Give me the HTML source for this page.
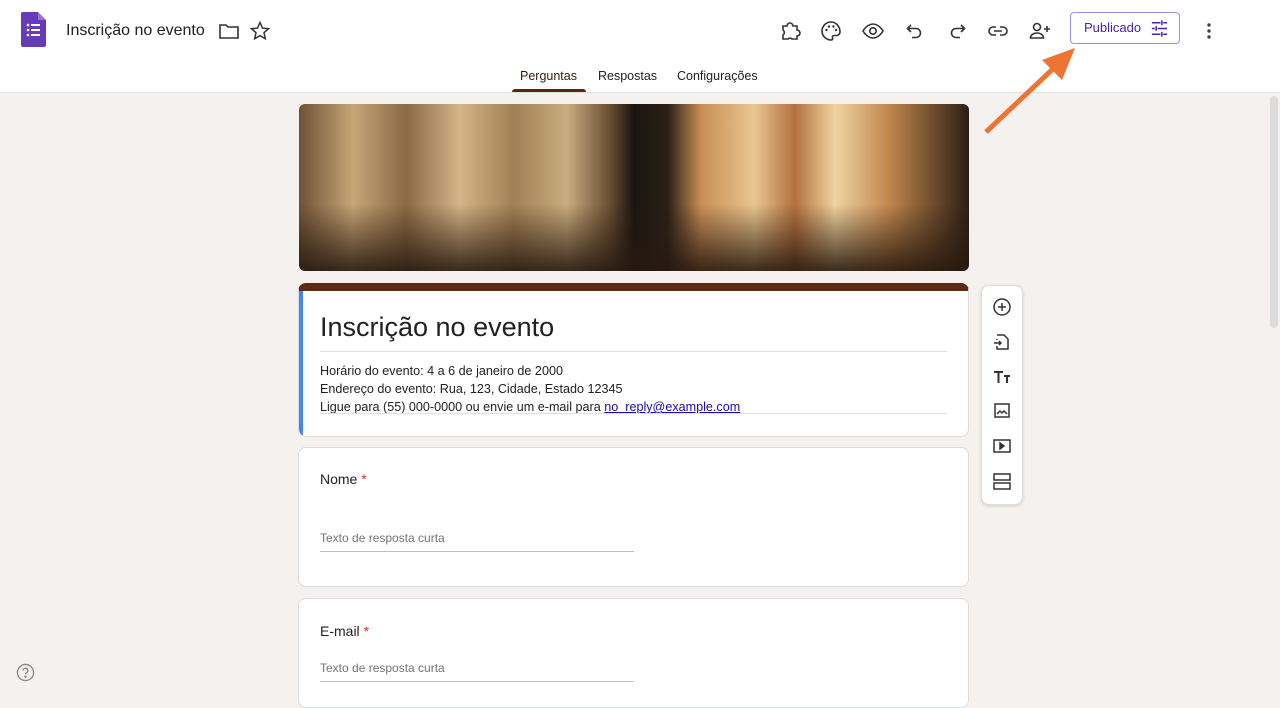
<!DOCTYPE html>
<html><head><meta charset="utf-8"><style>
*{box-sizing:border-box;margin:0;padding:0}
body{width:1280px;height:698px;overflow:hidden;background:#f4f1ee;font-family:"Liberation Sans",Arial,sans-serif;color:#202124;position:relative}
.hdr{position:absolute;left:0;top:0;width:1280px;height:93px;background:#fff;border-bottom:1px solid #e0e0e0}
.ic{position:absolute;top:19px;width:24px;height:24px}
.card{position:absolute;left:298px;width:671px;background:#fff;border:1px solid #dadce0;border-radius:8px}
.lbl{position:absolute;left:21px;font-size:14px}
.ph{position:absolute;left:21px;width:314px;font-size:12px;color:#70757a;border-bottom:1px solid #bdbdbd;padding-bottom:6px}
</style></head><body>
<div class="hdr">
<svg style="position:absolute;left:21px;top:12px" width="25" height="35" viewBox="0 0 25 35"><path d="M2 0h15l8 8v25a2 2 0 0 1-2 2H2a2 2 0 0 1-2-2V2a2 2 0 0 1 2-2z" fill="#673ab7"/><path d="M17 0l8 8h-8z" fill="#9575cd"/><g fill="#fff"><circle cx="7" cy="13" r="1.3"/><circle cx="7" cy="18" r="1.3"/><circle cx="7" cy="23" r="1.3"/><rect x="10" y="12" width="9" height="2"/><rect x="10" y="17" width="9" height="2"/><rect x="10" y="22" width="9" height="2"/></g></svg>
<div style="position:absolute;left:66px;top:22px;font-size:16px;color:#202124">Inscrição no evento</div>
<svg class="ic" style="left:217px" viewBox="0 0 24 24"><path d="M3 6h6l2 2h10v11H3z" fill="none" stroke="#333" stroke-width="1.6"/></svg>
<svg class="ic" style="left:248px" viewBox="0 0 24 24"><path d="M12 3.5l2.5 5.6 6 .6-4.5 4 1.3 6-5.3-3.1-5.3 3.1 1.3-6-4.5-4 6-.6z" fill="none" stroke="#333" stroke-width="1.5"/></svg>
<svg class="ic" style="left:778px" viewBox="0 0 24 24"><path d="M5 7h4a3 3 0 0 1 6 0h4v4a3 3 0 0 1 0 6v3h-5a3 3 0 0 0-4 0H5v-4a3 3 0 0 0 0-5z" fill="none" stroke="#333" stroke-width="1.6"/></svg>
<svg class="ic" style="left:819px" viewBox="0 0 24 24"><path d="M12 3a9 9 0 0 0 0 18c1.5 0 2-1 1.5-2s0-2.5 1.5-2.5h2.5A3.5 3.5 0 0 0 21 13c0-5.5-4-10-9-10z" fill="none" stroke="#333" stroke-width="1.6"/><circle cx="7.5" cy="11" r="1.2" fill="#333"/><circle cx="10" cy="7.5" r="1.2" fill="#333"/><circle cx="14.5" cy="7.5" r="1.2" fill="#333"/><circle cx="17" cy="11" r="1.2" fill="#333"/></svg>
<svg class="ic" style="left:861px" viewBox="0 0 24 24"><path d="M2 12c3-5 7-7 10-7s7 2 10 7c-3 5-7 7-10 7s-7-2-10-7z" fill="none" stroke="#333" stroke-width="1.6"/><circle cx="12" cy="12" r="3.2" fill="none" stroke="#333" stroke-width="1.6"/></svg>
<svg class="ic" style="left:903px" viewBox="0 0 24 24"><path d="M8 6L4.5 9.5 8 13M5 9.5h8a4.5 4.5 0 0 1 0 9H9" fill="none" stroke="#333" stroke-width="1.6"/></svg>
<svg class="ic" style="left:945px" viewBox="0 0 24 24"><path d="M16 6l3.5 3.5L16 13M19 9.5h-8a4.5 4.5 0 0 0 0 9h4" fill="none" stroke="#333" stroke-width="1.6"/></svg>
<svg class="ic" style="left:986px" viewBox="0 0 24 24"><path d="M10 8H7a4 4 0 0 0 0 8h3M14 8h3a4 4 0 0 1 0 8h-3M8 12h8" fill="none" stroke="#333" stroke-width="1.6"/></svg>
<svg class="ic" style="left:1028px" viewBox="0 0 24 24"><circle cx="9" cy="8" r="3.5" fill="none" stroke="#333" stroke-width="1.6"/><path d="M2.5 19c0-3 3-5 6.5-5s6.5 2 6.5 5z" fill="none" stroke="#333" stroke-width="1.6"/><path d="M19 7v6M16 10h6" stroke="#333" stroke-width="1.6"/></svg>
<div style="position:absolute;left:1070px;top:12px;width:110px;height:32px;border:1px solid #9e8fe0;border-radius:4px;color:#4527a0;font-size:13px;line-height:30px;padding-left:13px">Publicado
<svg style="position:absolute;left:79px;top:6px" width="19" height="19" viewBox="0 0 20 20" stroke="#4527a0" stroke-width="1.6"><path d="M2 4h9M14 4h4M12.5 1.5v5M2 10h3M8 10h10M6.5 7.5v5M2 16h9M14 16h4M12.5 13.5v5"/></svg></div>
<svg class="ic" style="left:1197px" viewBox="0 0 24 24" fill="#444"><circle cx="12" cy="6" r="1.7"/><circle cx="12" cy="12" r="1.7"/><circle cx="12" cy="18" r="1.7"/></svg>
<div style="position:absolute;left:520px;top:69px;font-size:12.5px;color:#3b1a0c">Perguntas</div>
<div style="position:absolute;left:512px;top:89px;width:74px;height:3px;background:#5b2410;border-radius:3px 3px 0 0"></div>
<div style="position:absolute;left:598px;top:69px;font-size:12.5px">Respostas</div>
<div style="position:absolute;left:677px;top:69px;font-size:12.5px">Configurações</div>
</div>
<svg style="position:absolute;left:980px;top:44px" width="110" height="92"><path d="M6 88L76 22" stroke="#ee7433" stroke-width="5"/><path d="M95 4L62 16 82 36z" fill="#ee7433"/></svg>
<div style="position:absolute;left:1270px;top:96px;width:8px;height:232px;background:#ddd;border-radius:4px"></div>
<div style="position:absolute;left:299px;top:104px;width:670px;height:167px;border-radius:6px;overflow:hidden;background:linear-gradient(180deg,rgba(0,0,0,0) 0,rgba(0,0,0,0) 60%,rgba(40,25,15,.9) 100%),linear-gradient(90deg,#6e5235 0,#c6a577 8%,#8a6a45 16%,#d4b488 24%,#a07f55 32%,#c9ac80 40%,#705436 46%,#1a1410 50%,#2a2018 55%,#c98e55 60%,#e9c690 68%,#b3703e 74%,#f0d3a0 80%,#c0874d 88%,#6b4a2c 95%,#2a1e14 100%)"></div>
<div class="card" style="top:283px;height:154px;border-top:8px solid #5d2a12;overflow:hidden">
<div style="position:absolute;left:-1px;top:0;width:5px;height:146px;background:#4285f4"></div>
<div style="position:absolute;left:21px;top:21px;font-size:27px">Inscrição no evento</div>
<div style="position:absolute;left:21px;top:60px;width:627px;border-top:1px solid #e0e0e0"></div>
<div style="position:absolute;left:21px;top:71px;font-size:12.6px;line-height:18px">Horário do evento: 4 a 6 de janeiro de 2000<br>Endereço do evento: Rua, 123, Cidade, Estado 12345<br>Ligue para (55) 000-0000 ou envie um e-mail para <span style="color:#1a0dab;text-decoration:underline">no_reply@example.com</span></div>
<div style="position:absolute;left:21px;top:122px;width:627px;border-top:1px solid #e0e0e0"></div>
</div>
<div class="card" style="top:447px;height:140px">
<div class="lbl" style="top:23px">Nome <span style="color:#d93025">*</span></div>
<div class="ph" style="top:83px">Texto de resposta curta</div></div>
<div class="card" style="top:598px;height:110px">
<div class="lbl" style="top:24px">E-mail <span style="color:#d93025">*</span></div>
<div class="ph" style="top:62px">Texto de resposta curta</div></div>
<div style="position:absolute;left:981px;top:285px;width:42px;height:220px;background:#fff;border:1px solid #dadce0;border-radius:8px;box-shadow:0 1px 3px rgba(0,0,0,.15)">
<svg style="position:absolute;left:9px;top:11px" width="22" height="200" viewBox="0 0 22 200" fill="none" stroke="#333" stroke-width="1.5">
<circle cx="11" cy="10" r="8"/><path d="M11 6v8M7 10h8"/>
<path d="M6 38h7l4 4v10H6v-3M6 43v-1M3 46h7M8 44l2 2-2 2"/>
<path d="M3 75h9M7.5 75v11M13 79h6M16 79v7" stroke-width="2"/>
<rect x="4" y="107" width="14" height="13"/><path d="M6 117l3-3 2 2 2-2 3 3"/>
<rect x="3" y="143" width="16" height="12"/><path d="M9 146v6l4-3z" fill="#333"/>
<rect x="3" y="177" width="16" height="6"/><rect x="3" y="186" width="16" height="6"/>
</svg></div>
<svg style="position:absolute;left:16px;top:663px" width="19" height="19" viewBox="0 0 20 20" fill="none" stroke="#888" stroke-width="1.4"><circle cx="10" cy="10" r="8.5"/><path d="M7.5 8a2.5 2.5 0 1 1 3.5 2.3c-.7.4-1 .9-1 1.7"/><circle cx="10" cy="14.5" r=".6" fill="#888"/></svg>
</body></html>
